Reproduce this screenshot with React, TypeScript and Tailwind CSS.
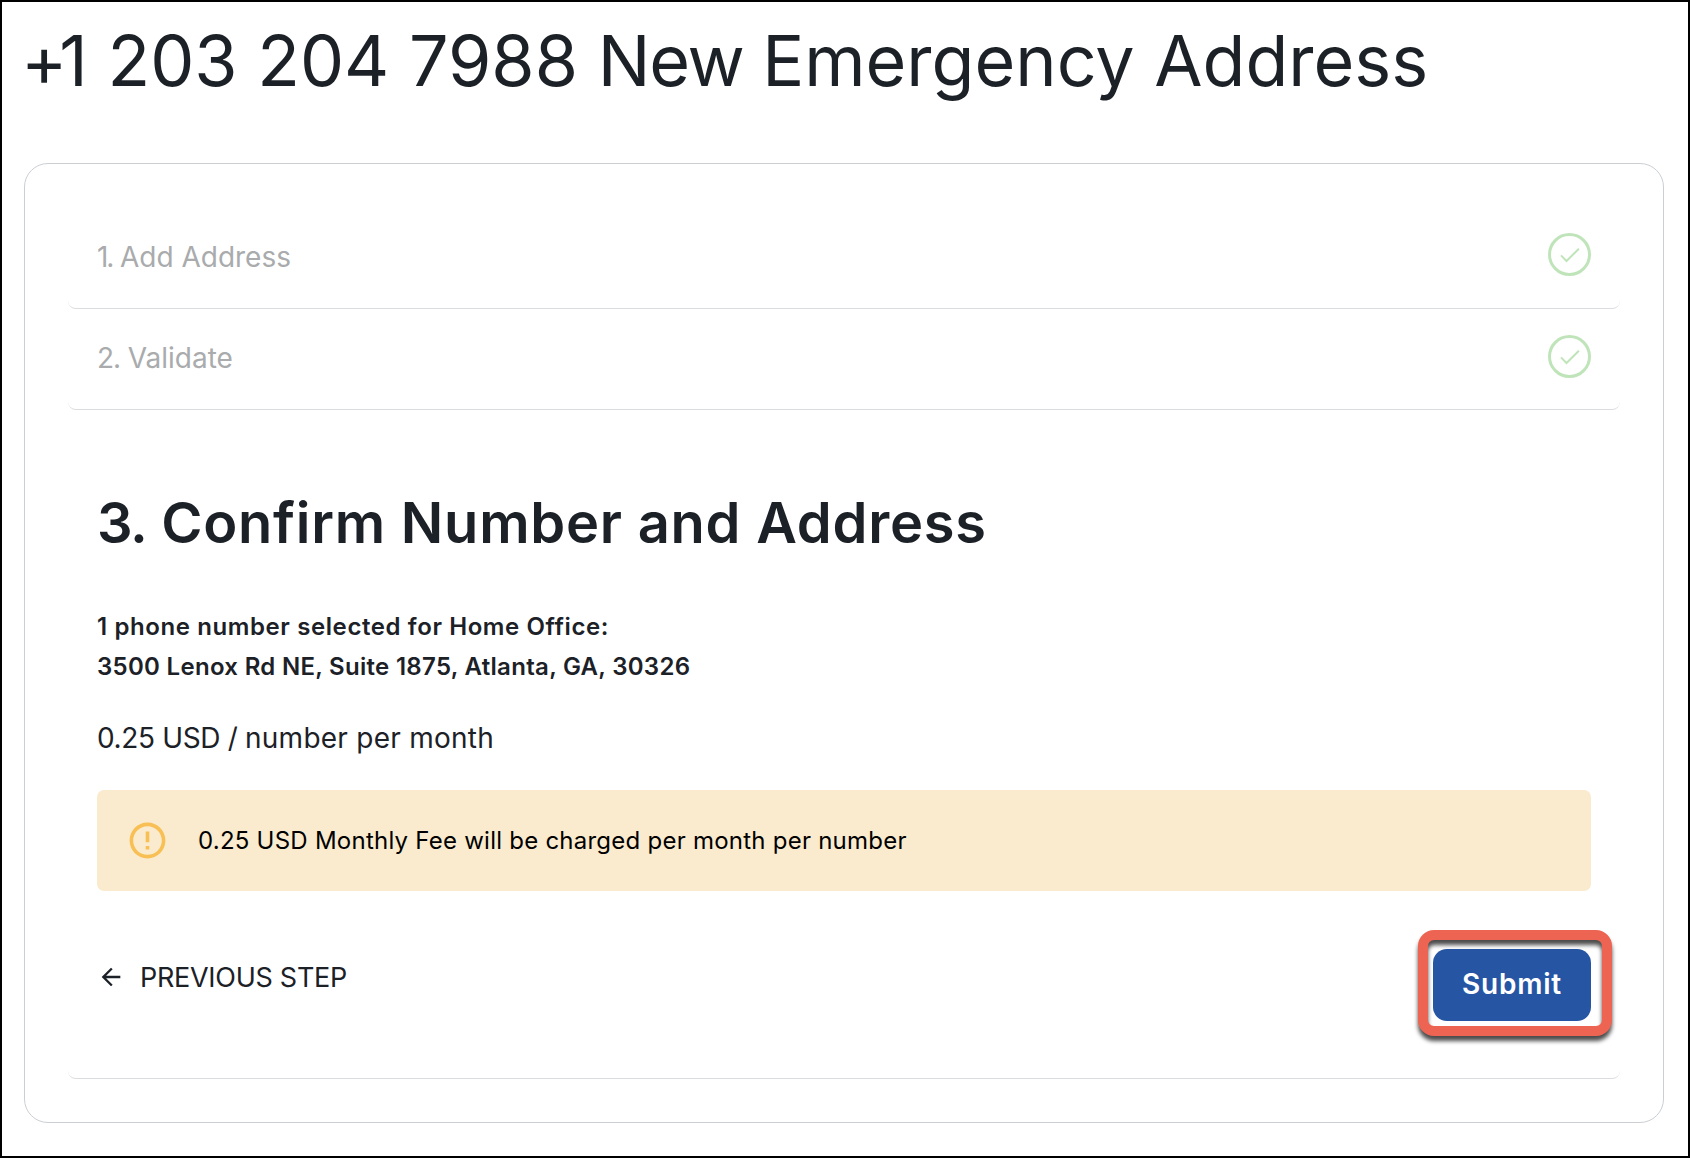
import { MdArrowBack, MdErrorOutline } from "react-icons/md";

const sectionClass = "rounded-b-[8px] border-b border-[#dbdcdd] px-[29px]";

const completedSteps = [
  { number: "1.", label: "Add Address", numberClass: "tracking-[-2.2px]", iconClass: "mt-[25px]" },
  { number: "2.", label: "Validate", numberClass: "tracking-[-1.2px]", iconClass: "mt-[26px]" },
];

const CheckCircle = ({ className }: { className: string }) => (
  <svg className={`size-[43px] ${className}`} viewBox="0 0 43 43" fill="none" stroke="#c0e4b9">
    <circle cx="21.5" cy="21.5" r="20" strokeWidth="3" />
    <path d="M13 22.4l5.5 5.6 12.4-12.3" strokeWidth="2" />
  </svg>
);

const App = () => (
  <div className="h-[1158px] w-[1690px] overflow-hidden whitespace-nowrap border-2 border-black bg-white px-[22px] pt-[17px] font-['Inter',sans-serif] text-[#1c2127]">
    <h1 className="-ml-[3px] text-[70px] leading-[84px]">
      <span className="tracking-[-8px]">+</span>1 203 204 7988 <span className="tracking-[-1.2px]">New </span>
      Emergency Address
    </h1>

    <main className="mt-[60px] h-[960px] w-[1640px] rounded-[24px] border border-[#cbcfd3] p-[43px] pt-[44px]">
      {completedSteps.map((step) => (
        <section key={step.label} className={`flex h-[101px] items-start justify-between ${sectionClass}`}>
          <h2 className="mt-[29px] text-[28px] leading-10 text-[#a9abad]">
            <span className={step.numberClass}>{step.number}</span> {step.label}
          </h2>
          <CheckCircle className={step.iconClass} />
        </section>
      ))}

      <section className={`h-[669px] pt-[79px] ${sectionClass}`}>
        <h2 className="text-[56px] font-semibold leading-[68px] tracking-[0.75px]">
          <span className="tracking-[-1.5px]">3.</span> Confirm Number and Address
        </h2>

        <div className="mt-[50px] text-[24px] font-semibold leading-10">
          <p className="tracking-[0.6px]">1 phone number selected for Home Office:</p>
          <p className="tracking-[0.3px]">3500 Lenox Rd NE, Suite 1875, Atlanta, GA, 30326</p>
        </div>

        <p className="mt-[31px] text-[28px] leading-10 tracking-[0.25px]">
          <span className="tracking-[-0.35px]">0.25 USD / </span>number per month
        </p>

        <div className="mt-8 flex h-[101px] items-center gap-[29px] rounded-[7px] bg-[#faebce] pl-[29px]">
          <MdErrorOutline className="size-[43px] text-[#f8bf54]" />
          <p className="text-[24px] tracking-[0.24px] text-black">0.25 USD Monthly Fee will be charged per month per number</p>
        </div>

        <div className="mt-[58px] flex items-start justify-between">
          <button type="button" className="mt-2 flex h-10 items-center gap-[15px]">
            <MdArrowBack className="size-7" />
            <span className="pt-0.5 text-[27px] leading-10 tracking-[-0.28px]">PREVIOUS STEP</span>
          </button>

          <div className="relative">
            <button type="button" className="h-[72px] w-[158px] rounded-[14px] bg-[#2655a4] pb-0.5 text-[28px] font-semibold leading-[70px] tracking-[0.8px] text-white">
              Submit
            </button>
            <div className="pointer-events-none absolute -bottom-[15px] -left-[15px] -right-[21px] -top-[19px] rounded-[16px] border-[10px] border-[#ed6453] drop-shadow-[0_5px_2px_rgba(0,0,0,0.7)]" />
          </div>
        </div>
      </section>
    </main>
  </div>
);

export default App;
